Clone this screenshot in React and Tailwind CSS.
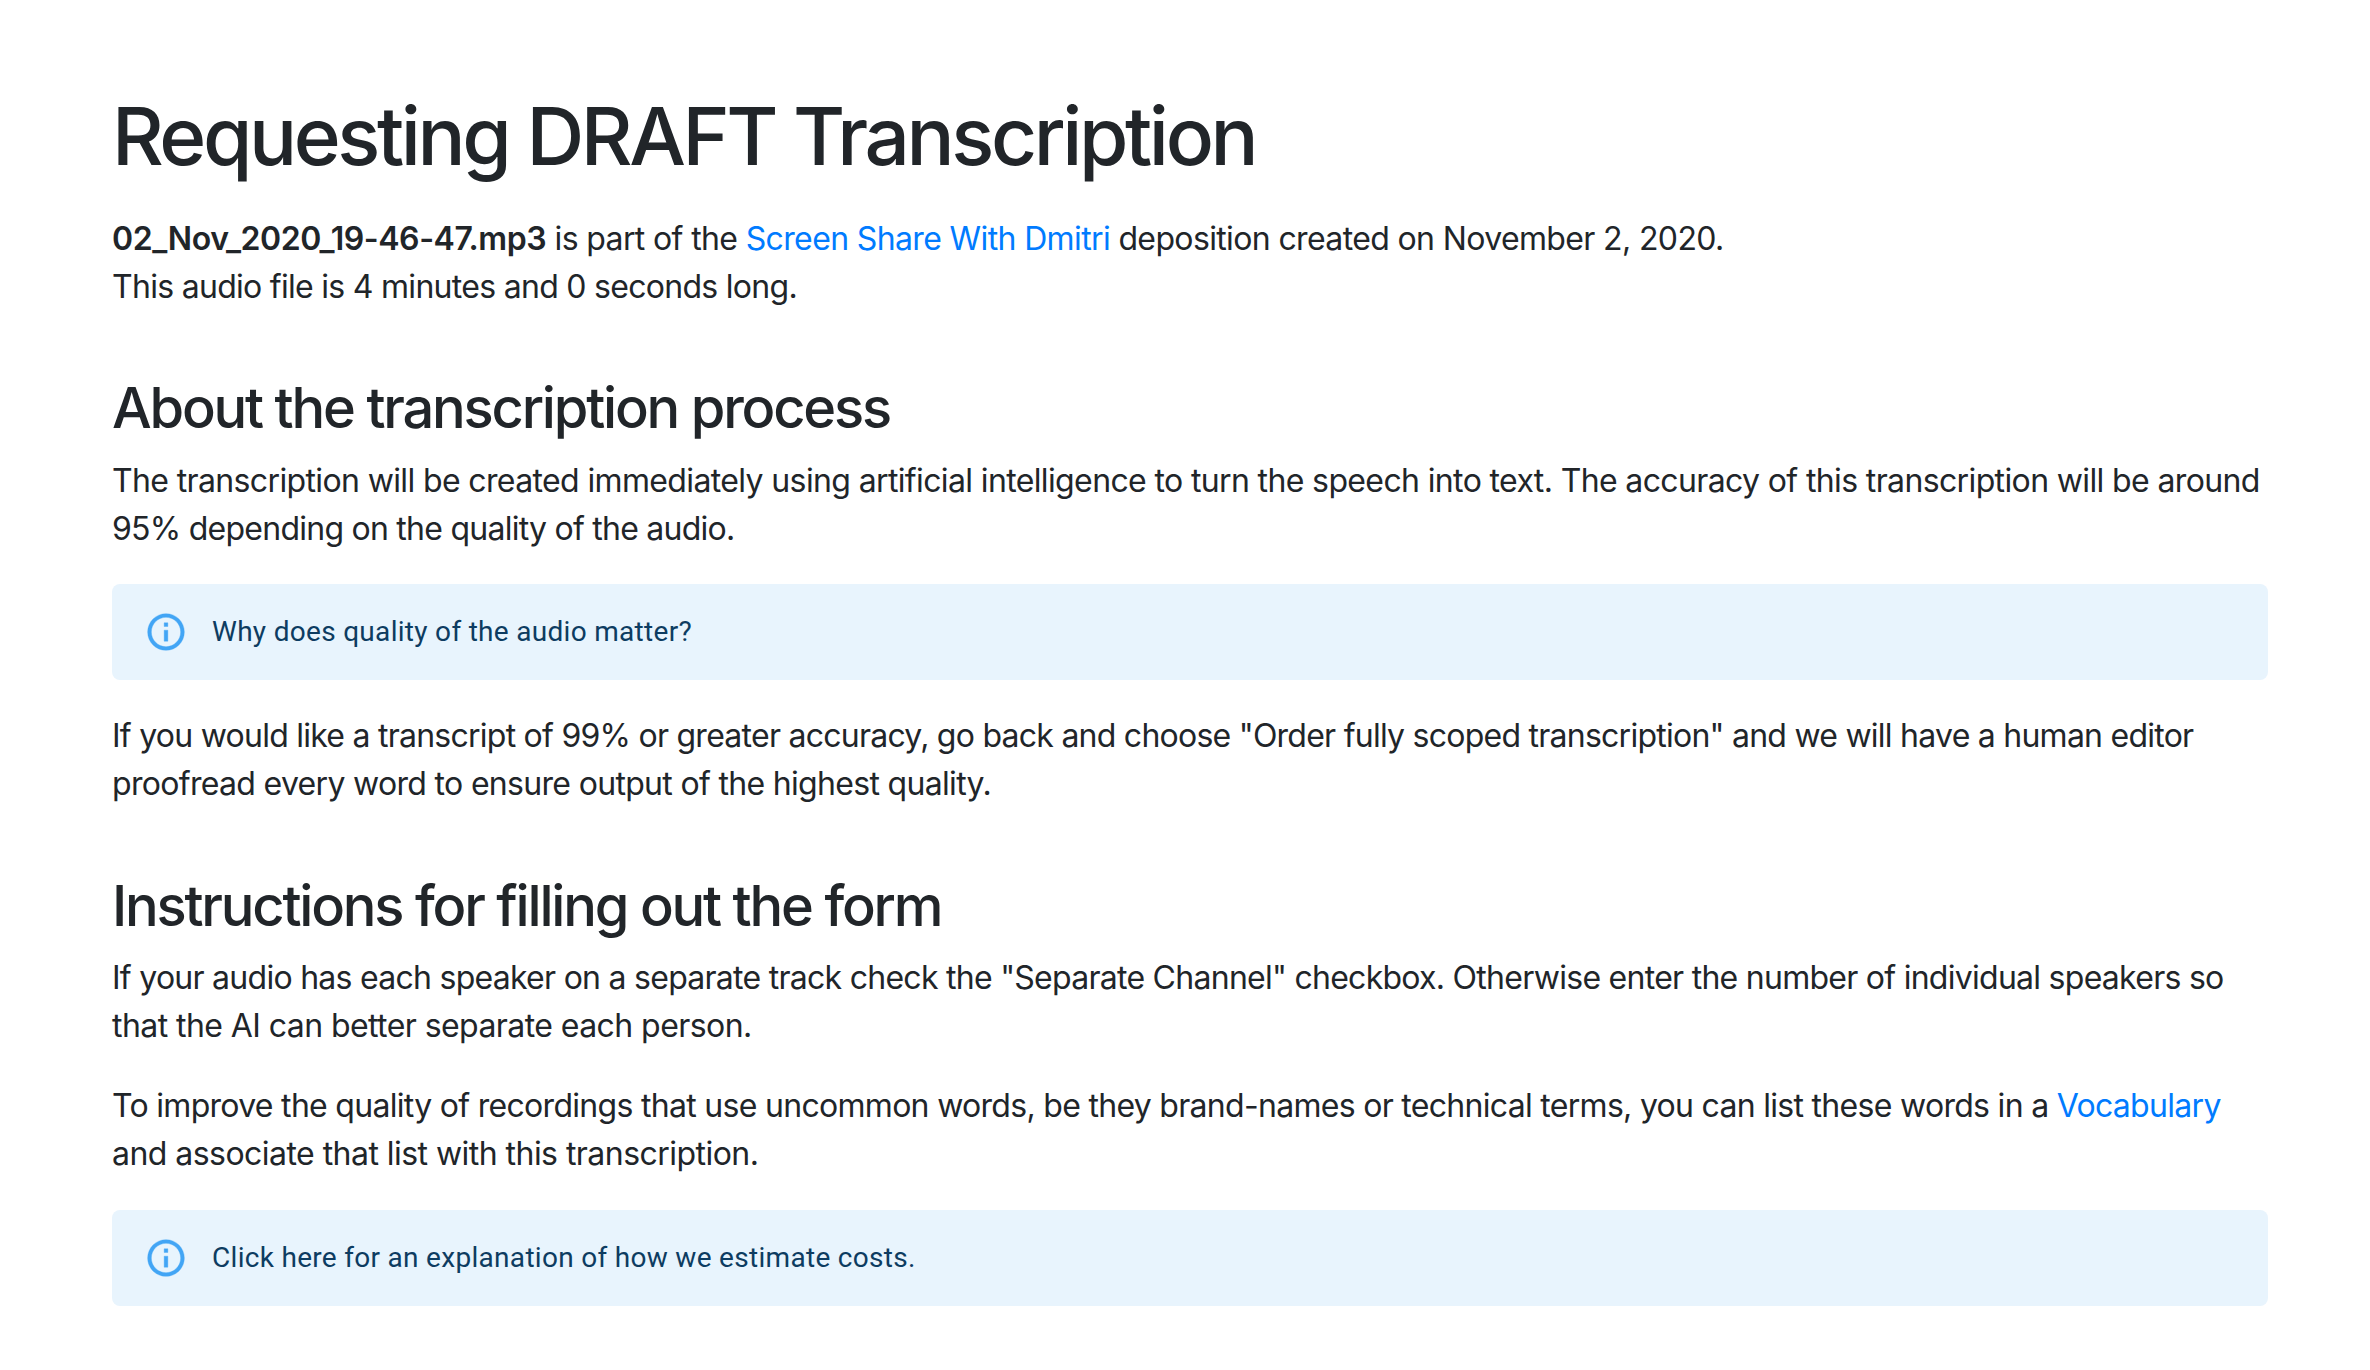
const InfoBanner = ({ children }) => (
  <div className="flex rounded-lg bg-[#e8f4fd] px-8 py-3 text-[28px] leading-[40px] tracking-[0.3px] text-[#0d3c61] font-['Roboto',sans-serif]">
    <div className="flex py-[14px] mr-6 h-[72px] items-center">
      <svg viewBox="0 0 24 24" className="w-11 h-11 fill-[#42a5f5] stroke-[#42a5f5] stroke-[0.2]">
        <path d="M11 7h2v2h-2zm0 4h2v6h-2zm1-9C6.48 2 2 6.48 2 12s4.48 10 10 10 10-4.48 10-10S17.52 2 12 2zm0 18c-4.41 0-8-3.59-8-8s3.59-8 8-8 8 3.59 8 8-3.59 8-8 8z" />
      </svg>
    </div>
    <div className="py-4">{children}</div>
  </div>
);

const App = () => {
  return (
    <div className="min-h-screen bg-white pl-[112px] pt-[88px] text-[#212529] font-['Inter',sans-serif] text-[32px] leading-[48px]">
      <div className="w-[2156px]">
        <h1 className="text-[80px] leading-[96px] font-medium tracking-[-3.4px] mb-[31px]">Requesting DRAFT Transcription</h1>
        <p className="mb-16 tracking-[-0.63px]">
          <b className="font-semibold tracking-[-0.43px]">02_Nov_2020_19-46-47.mp3</b> is part of the <a href="#" className="text-[#007bff]">Screen Share With Dmitri</a> deposition created on November 2, 2020.
          <br />
          <span className="tracking-[-0.71px]">This audio file is 4 minutes and 0 seconds long.</span>
        </p>

        <h2 className="text-[56px] leading-[67px] font-medium tracking-[-2.2px] mb-[15px]">About the transcription process</h2>
        <p className="mb-[31px] tracking-[-0.63px]">
          The transcription will be created immediately using artificial intelligence to turn the speech into text. The accuracy of this transcription will be around <span className="tracking-[-0.75px]">95% depending on the quality of the audio.</span>
        </p>
        <InfoBanner>Why does quality of the audio matter?</InfoBanner>
        <p className="mt-8 mb-[65px] tracking-[-0.75px]">
          If you would like a transcript of 99% or greater accuracy, go back and choose "Order fully scoped transcription" and we will have a human editor <span className="tracking-[-0.68px]">proofread every word to ensure output of the highest quality.</span>
        </p>

        <h2 className="text-[56px] leading-[67px] font-medium tracking-[-2.2px] mb-[14px]">Instructions for filling out the form</h2>
        <p className="mb-8 tracking-[-0.73px]">
          If your audio has each speaker on a separate track check the "Separate Channel" checkbox. Otherwise enter the number of individual speakers so <span className="tracking-[-0.57px]">that the AI can better separate each person.</span>
        </p>
        <p className="mb-8 tracking-[-0.7px]">
          To improve the quality of recordings that use uncommon words, be they brand-names or technical terms, you can list these words in a <a href="#" className="text-[#007bff]">Vocabulary</a> <span className="tracking-[-0.54px]">and associate that list with this transcription.</span>
        </p>
        <InfoBanner>Click here for an explanation of how we estimate costs.</InfoBanner>
      </div>
    </div>
  );
};

export default App;
